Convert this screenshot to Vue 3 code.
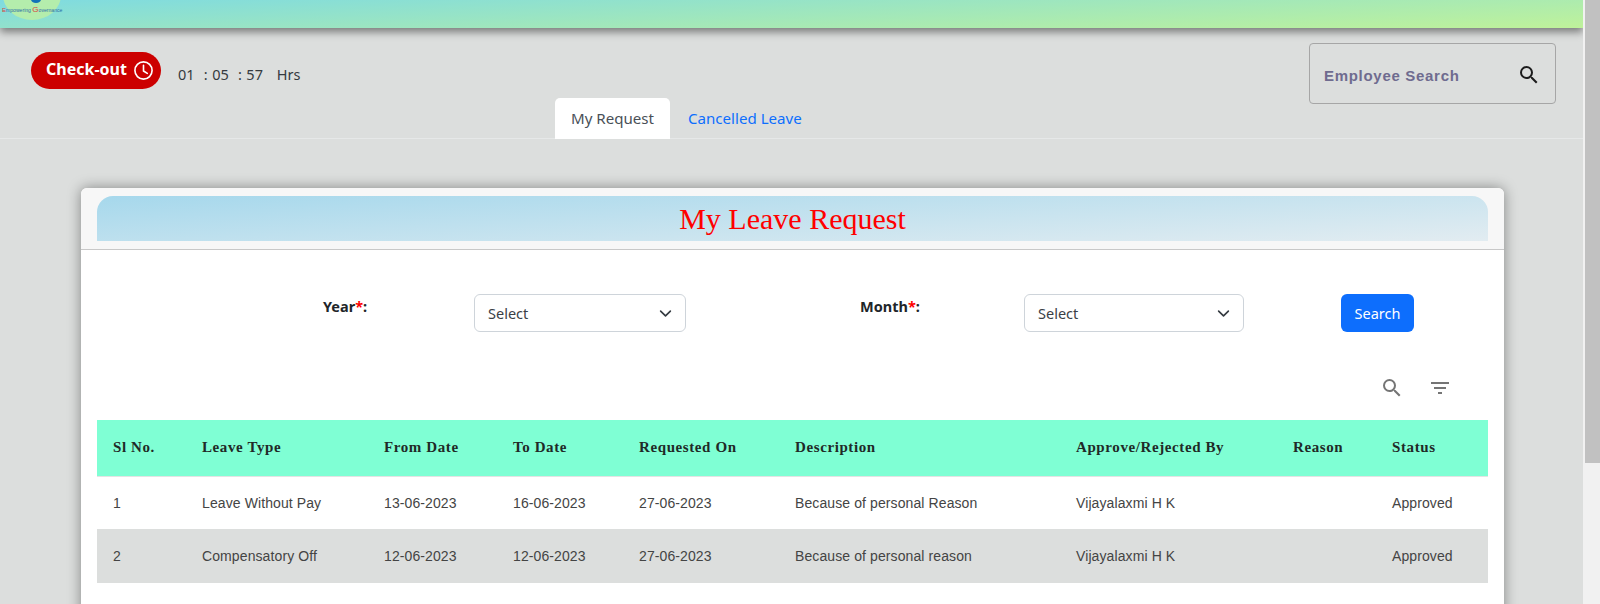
<script setup>
const columns = [
  { label: 'Sl No.', width: 89 },
  { label: 'Leave Type', width: 182 },
  { label: 'From Date', width: 129 },
  { label: 'To Date', width: 126 },
  { label: 'Requested On', width: 156 },
  { label: 'Description', width: 281 },
  { label: 'Approve/Rejected By', width: 217 },
  { label: 'Reason', width: 99 },
  { label: 'Status', width: 112 }
]

const rows = [
  ['1', 'Leave Without Pay', '13-06-2023', '16-06-2023', '27-06-2023', 'Because of personal Reason', 'Vijayalaxmi H K', '', 'Approved'],
  ['2', 'Compensatory Off', '12-06-2023', '12-06-2023', '27-06-2023', 'Because of personal reason', 'Vijayalaxmi H K', '', 'Approved']
]
</script>

<template>
  <div class="page">
    <div class="main">
      <header class="topbar">
        <div class="logo">
          <span class="logo-mark"></span>
          <span class="logo-text"><b>E</b>mpowering <b class="big">G</b>overnance</span>
        </div>
      </header>

      <div class="attendance">
        <div class="checkin">
          <button class="checkout">
            Check-out
            <svg width="21" height="21" viewBox="0 0 22 22" fill="none" stroke="#fff" stroke-width="1.7">
              <circle cx="11" cy="11" r="9" />
              <path d="M11 5.5V11.5L15 14" stroke-linecap="round" stroke-linejoin="round" />
            </svg>
          </button>
          <span class="timer">01 &nbsp;: 05 &nbsp;: 57 &nbsp; Hrs</span>
        </div>
        <div class="employee-search">
          <span>Employee Search</span>
          <svg width="24" height="24" viewBox="0 0 24 24" fill="#1c1c1c">
            <path d="M15.5 14h-.79l-.28-.27A6.47 6.47 0 0 0 16 9.5 6.5 6.5 0 1 0 9.5 16c1.61 0 3.09-.59 4.23-1.57l.27.28v.79l5 4.99L20.49 19l-4.99-5zm-6 0C7.01 14 5 11.99 5 9.5S7.01 5 9.5 5 14 7.01 14 9.5 11.99 14 9.5 14z" />
          </svg>
        </div>
      </div>

      <nav class="tabs">
        <a class="tab active">My Request</a>
        <a class="tab">Cancelled Leave</a>
      </nav>

      <section class="card">
        <div class="card-header">
          <h2>My Leave Request</h2>
        </div>

        <div class="filters">
          <label class="year-label">Year<i>*</i>:</label>
          <div class="select year-select">
            Select
            <svg width="13" height="13" viewBox="0 0 16 16" fill="none" stroke="#343a40" stroke-width="2" stroke-linecap="round" stroke-linejoin="round">
              <path d="M2 5l6 6 6-6" />
            </svg>
          </div>
          <label class="month-label">Month<i>*</i>:</label>
          <div class="select month-select">
            Select
            <svg width="13" height="13" viewBox="0 0 16 16" fill="none" stroke="#343a40" stroke-width="2" stroke-linecap="round" stroke-linejoin="round">
              <path d="M2 5l6 6 6-6" />
            </svg>
          </div>
          <button class="search-btn">Search</button>
        </div>

        <div class="tools">
          <svg width="24" height="24" viewBox="0 0 24 24" fill="#757575">
            <path d="M15.5 14h-.79l-.28-.27A6.47 6.47 0 0 0 16 9.5 6.5 6.5 0 1 0 9.5 16c1.61 0 3.09-.59 4.23-1.57l.27.28v.79l5 4.99L20.49 19l-4.99-5zm-6 0C7.01 14 5 11.99 5 9.5S7.01 5 9.5 5 14 7.01 14 9.5 11.99 14 9.5 14z" />
          </svg>
          <svg width="24" height="24" viewBox="0 0 24 24" fill="#757575">
            <path d="M10 18h4v-2h-4v2zM3 6v2h18V6H3zm3 7h12v-2H6v2z" />
          </svg>
        </div>

        <table class="leave-table">
          <colgroup>
            <col v-for="col in columns" :key="col.label" :style="{ width: col.width + 'px' }" />
          </colgroup>
          <thead>
            <tr>
              <th v-for="col in columns" :key="col.label">{{ col.label }}</th>
            </tr>
          </thead>
          <tbody>
            <tr v-for="row in rows" :key="row[0]">
              <td v-for="(cell, i) in row" :key="i">{{ cell }}</td>
            </tr>
          </tbody>
        </table>
      </section>
    </div>

    <div class="scrollbar">
      <div class="thumb"></div>
    </div>
  </div>
</template>

<style>
html, body {
  margin: 0;
  height: 604px;
  overflow: hidden;
  background: #fff;
}
</style>

<style scoped>
.page {
  display: flex;
  height: 604px;
  overflow: hidden;
  font-family: "Noto Sans", "Liberation Sans", sans-serif;
}

.main {
  width: 1583px;
  flex: none;
  background: #dcdedd;
  overflow: hidden;
}

.topbar {
  position: relative;
  z-index: 2;
  height: 28px;
  background: linear-gradient(177.5deg, #7fdbe0 0%, #bff29a 100%);
  box-shadow: 0 4px 8px rgba(0, 0, 0, 0.45);
  overflow: hidden;
}

.logo {
  position: relative;
  width: 62px;
  height: 28px;
}

.logo::before {
  content: '';
  position: absolute;
  left: 3px;
  top: -30px;
  width: 58px;
  height: 50px;
  border-radius: 50%;
  background: #b4edac;
}

.logo-mark {
  position: absolute;
  left: 31px;
  top: -4px;
  width: 10px;
  height: 7px;
  border-radius: 50%;
  background: #1273b8;
}

.logo-text {
  position: absolute;
  left: 2px;
  top: 5px;
  font: 5.1px/9px "Liberation Sans", sans-serif;
  white-space: nowrap;
  color: #2a6ea8;
}

.logo-text b {
  font-weight: 400;
  font-size: 6px;
  color: #d8443c;
}

.logo-text b.big {
  font-size: 8px;
}

.attendance {
  display: flex;
  justify-content: space-between;
  align-items: flex-start;
  height: 70px;
  padding: 15px 27px 0 31px;
  box-sizing: border-box;
}

.checkin {
  display: flex;
  align-items: center;
  gap: 17px;
  margin-top: 9px;
}

.checkout {
  display: flex;
  align-items: center;
  justify-content: flex-start;
  gap: 6px;
  width: 130px;
  height: 37px;
  padding: 0 0 3px 15px;
  border: none;
  border-radius: 19px;
  background: #cc0000;
  color: #fff;
  font: 700 16px "Noto Sans", sans-serif;
}

.checkout svg {
  margin-top: 2px;
}

.timer {
  margin-top: 7px;
  font-size: 14.5px;
  word-spacing: 0.8px;
  color: #343a40;
}

.employee-search {
  display: flex;
  align-items: center;
  justify-content: space-between;
  width: 247px;
  height: 61px;
  padding: 2px 14px 0;
  box-sizing: border-box;
  border: 1px solid #a6a6a6;
  border-radius: 4px;
  color: #6f6b8f;
  font: 700 15px "Liberation Sans", sans-serif;
  letter-spacing: 0.7px;
}

.employee-search span {
  margin-top: 1px;
}

.tabs {
  display: flex;
  height: 41px;
  padding-left: 555px;
  border-bottom: 1px solid #e6e8e8;
  box-sizing: border-box;
}

.tab {
  display: flex;
  align-items: center;
  height: 41px;
  padding: 0 16px 2px;
  box-sizing: border-box;
  font-size: 15.1px;
  color: #0d6efd;
}

.tab + .tab {
  margin-left: 2px;
}

.tab.active {
  background: #fff;
  color: #495057;
  border-radius: 5px 5px 0 0;
}

.card {
  width: 1423px;
  height: 470px;
  margin: 49px 0 0 81px;
  background: #fff;
  border-radius: 6px;
  box-shadow: 0 0 14px rgba(0, 0, 0, 0.4);
}

.card-header {
  height: 62px;
  padding: 8px 16px 0;
  box-sizing: border-box;
  background: #f7f7f7;
  border-bottom: 1px solid #c8c8c8;
  border-radius: 6px 6px 0 0;
}

h2 {
  margin: 0;
  height: 45px;
  background: linear-gradient(177deg, #a6d8ec 0%, #e2ecf1 100%);
  border-radius: 16px 16px 0 0;
  color: #ff0000;
  font: 400 30px/46px "Liberation Serif", serif;
  text-align: center;
}

.filters {
  display: flex;
  align-items: flex-start;
  padding: 44px 0 0 242px;
  height: 88px;
  box-sizing: border-box;
  color: #212529;
}

.filters label {
  display: block;
  margin-top: 2px;
  font-size: 14.5px;
  font-weight: 700;
}

.filters i {
  color: #ff0000;
  font-style: normal;
}

.year-label { width: 151px; }
.month-label { width: 164px; margin-left: 174px; }

.select {
  display: flex;
  align-items: center;
  justify-content: space-between;
  height: 38px;
  padding: 0 13px 0 13px;
  box-sizing: border-box;
  border: 1px solid #ced4da;
  border-radius: 6px;
  background: #fff;
  font-size: 14.5px;
  color: #3b4046;
}

.year-select { width: 212px; }
.month-select { width: 220px; }

.search-btn {
  width: 73px;
  height: 38px;
  margin-left: 97px;
  border: none;
  border-radius: 6px;
  background: #0d6efd;
  color: #fff;
  font: 400 14.5px "Noto Sans", sans-serif;
}

.tools {
  display: flex;
  justify-content: flex-end;
  gap: 24px;
  height: 82px;
  padding: 38px 52px 0 0;
  box-sizing: border-box;
}

.leave-table {
  width: 1391px;
  margin-left: 16px;
  border-collapse: collapse;
  table-layout: fixed;
  font-family: "Liberation Sans", sans-serif;
}

th {
  height: 56px;
  padding: 0 0 0 16px;
  background: #7fffd4;
  border-bottom: 1px solid #e4e4e4;
  color: #1f2a27;
  font: 700 15px "Liberation Serif", serif;
  letter-spacing: 0.6px;
  text-align: left;
  box-sizing: border-box;
}

td {
  height: 52px;
  padding: 0 0 0 16px;
  font-size: 14px;
  letter-spacing: 0.1px;
  color: #444;
  white-space: nowrap;
}

tbody tr:nth-child(2) td {
  height: 54px;
  background: #dcdedd;
}

.scrollbar {
  flex: 1;
  padding-left: 2px;
  background: #f1f1f1;
}

.thumb {
  height: 463px;
  background: #c1c1c1;
}
</style>
